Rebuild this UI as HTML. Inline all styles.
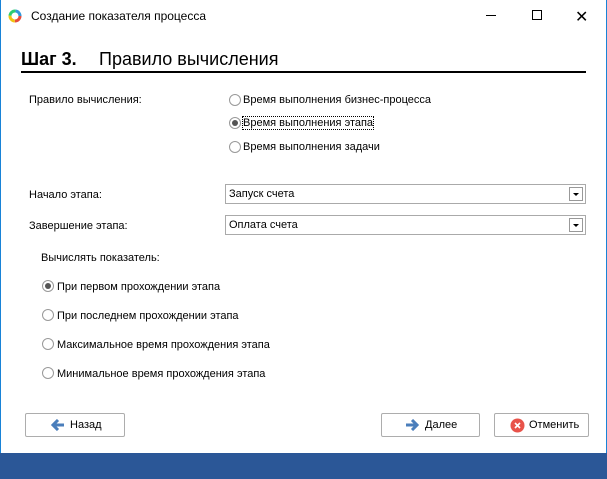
<!DOCTYPE html>
<html><head><meta charset="utf-8"><style>
*{margin:0;padding:0;box-sizing:border-box}
body{width:607px;height:479px;background:#fff;position:relative;overflow:hidden;font-family:"Liberation Sans",sans-serif;font-size:11px;color:#000}
.a{position:absolute;white-space:nowrap}
.r{position:absolute;width:12px;height:12px;border:1px solid #999;border-radius:50%;background:#fff}
.r.on::after{content:"";position:absolute;left:2px;top:2px;width:6px;height:6px;border-radius:50%;background:#555}
.cb{position:absolute;height:20px;border:1px solid #aaa;background:#fff}
.cb span{position:absolute;left:3px;top:3px}
.cb i{position:absolute;right:2px;top:2px;width:14px;height:14px;border:1px solid #999;background:#fff}
.cb i::after{content:"";position:absolute;left:3px;top:5px;border:3px solid transparent;border-top:3px solid #000}
.btn{position:absolute;height:24px;border:1px solid #adadad;border-radius:2px;background:#fff}
</style></head><body>
<div class="a" style="left:0;top:0;width:1px;height:479px;background:#1883d7"></div>
<div class="a" style="right:0;top:0;width:1px;height:479px;background:#1883d7"></div>
<svg class="a" style="left:8px;top:9px" width="14" height="14" viewBox="0 0 14 14"><circle cx="7" cy="7" r="5" fill="none" stroke="#e74c3c" stroke-width="3" stroke-dasharray="8 24"/><circle cx="7" cy="7" r="5" fill="none" stroke="#f1c40f" stroke-width="3" stroke-dasharray="0 8 8 24"/><circle cx="7" cy="7" r="5" fill="none" stroke="#2ecc71" stroke-width="3" stroke-dasharray="0 16 8 24"/><circle cx="7" cy="7" r="5" fill="none" stroke="#3498db" stroke-width="3" stroke-dasharray="0 24 8 24"/></svg>
<div class="a" style="left:31px;top:9px;font-size:12px">Создание показателя процесса</div>
<div class="a" style="left:486px;top:15px;width:10px;height:1px;background:#000"></div>
<div class="a" style="left:532px;top:10px;width:10px;height:10px;border:1px solid #000"></div>
<div class="a" style="left:575px;top:7px;font-size:16px">✕</div>
<div class="a" style="left:21px;top:49px;font-size:18px;font-weight:bold">Шаг 3.</div>
<div class="a" style="left:99px;top:49px;font-size:18px">Правило вычисления</div>
<div class="a" style="left:21px;top:71px;width:565px;height:2px;background:#000"></div>
<div class="a" style="left:29px;top:94px">Правило вычисления:</div>
<div class="r" style="left:229px;top:94px"></div><div class="a" style="left:243px;top:94px">Время выполнения бизнес-процесса</div>
<div class="r on" style="left:229px;top:117px"></div><div class="a" style="left:243px;top:117px;outline:1px dotted #000">Время выполнения этапа</div>
<div class="r" style="left:229px;top:141px"></div><div class="a" style="left:243px;top:141px">Время выполнения задачи</div>
<div class="a" style="left:29px;top:189px">Начало этапа:</div>
<div class="cb" style="left:225px;top:184px;width:361px"><span>Запуск счета</span><i></i></div>
<div class="a" style="left:29px;top:220px">Завершение этапа:</div>
<div class="cb" style="left:225px;top:215px;width:361px"><span>Оплата счета</span><i></i></div>
<div class="a" style="left:41px;top:252px">Вычислять показатель:</div>
<div class="r on" style="left:42px;top:280px"></div><div class="a" style="left:57px;top:281px">При первом прохождении этапа</div>
<div class="r" style="left:42px;top:309px"></div><div class="a" style="left:57px;top:310px">При последнем прохождении этапа</div>
<div class="r" style="left:42px;top:338px"></div><div class="a" style="left:57px;top:339px">Максимальное время прохождения этапа</div>
<div class="r" style="left:42px;top:367px"></div><div class="a" style="left:57px;top:368px">Минимальное время прохождения этапа</div>
<div class="btn" style="left:25px;top:413px;width:100px"><svg class="a" style="left:25px;top:5px" width="14" height="12"><path d="M13 6H3M7 1L2 6l5 5" stroke="#4a7ebb" stroke-width="3" fill="none"/></svg><span class="a" style="left:44px;top:5px">Назад</span></div>
<div class="btn" style="left:381px;top:413px;width:99px"><svg class="a" style="left:23px;top:5px" width="14" height="12"><path d="M1 6h10M7 1l5 5-5 5" stroke="#4a7ebb" stroke-width="3" fill="none"/></svg><span class="a" style="left:43px;top:5px">Далее</span></div>
<div class="btn" style="left:494px;top:413px;width:95px"><svg class="a" style="left:15px;top:4px" width="15" height="15"><circle cx="7.5" cy="7.5" r="7" fill="#e8534a"/><path d="M5 5l5 5M10 5l-5 5" stroke="#fff" stroke-width="1.6"/></svg><span class="a" style="left:34px;top:5px">Отменить</span></div>
<div class="a" style="left:0;top:453px;width:607px;height:26px;background:#2b5797"></div>
</body></html>
